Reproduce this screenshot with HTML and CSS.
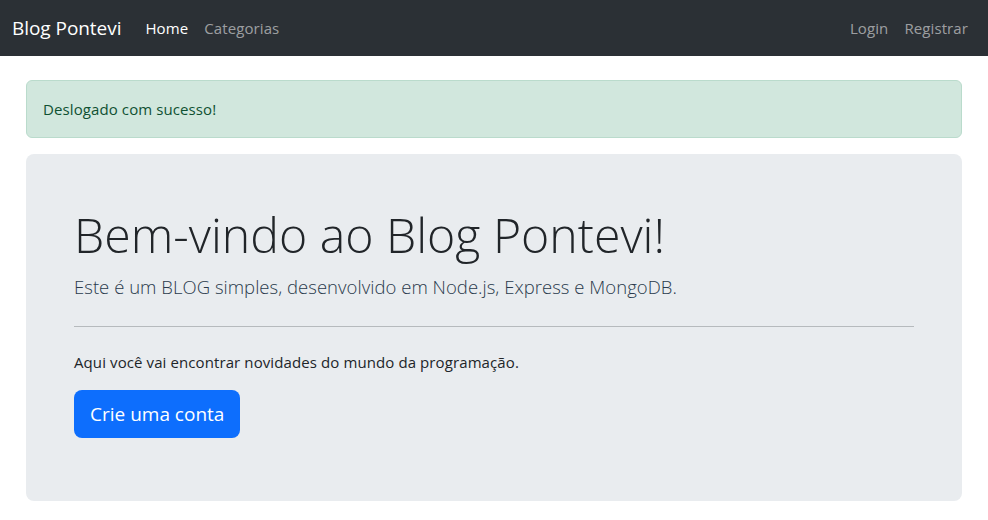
FILE: index.html
```html
<!DOCTYPE html>
<html lang="pt-br">
<head>
<meta charset="utf-8">
<title>Blog Pontevi</title>
<link rel="stylesheet" href="styles.css">
</head>
<body>
<nav class="navbar">
  <div class="nav-left">
    <a class="brand" href="#">Blog Pontevi</a>
    <a class="nav-link active" href="#">Home</a>
    <a class="nav-link" href="#">Categorias</a>
  </div>
  <div class="nav-right">
    <a class="nav-link" href="#">Login</a>
    <a class="nav-link" href="#">Registrar</a>
  </div>
</nav>
<main class="container">
  <div class="alert">Deslogado com sucesso!</div>
  <section class="jumbotron">
    <h1 class="display">Bem-vindo ao Blog Pontevi!</h1>
    <p class="lead">Este é um BLOG simples, desenvolvido em Node.js, Express e MongoDB.</p>
    <hr class="divider">
    <p class="text">Aqui você vai encontrar novidades do mundo da programação.</p>
    <a class="btn" href="#">Crie uma conta</a>
  </section>
</main>
</body>
</html>
```
FILE: styles.css
```css
* { box-sizing: border-box; }
body {
  margin: 0;
  font-family: "Open Sans", "Noto Sans", sans-serif;
  font-size: 16px;
  line-height: 1.5;
  color: #212529;
  background: #fff;
}
a { text-decoration: none; }
.navbar {
  height: 56px;
  background: #2b3035;
  display: flex;
  align-items: center;
  justify-content: space-between;
  padding: 0 12px;
}
.nav-left, .nav-right { display: flex; align-items: center; }
.brand {
  font-size: 19px;
  color: #fff;
  margin-right: 16px;
  letter-spacing: -0.05px;
}
.nav-link {
  font-size: 15px;
  color: rgba(255,255,255,.55);
  padding: 8px 8px;
  letter-spacing: 0.1px;
}
.nav-link.active { color: #fff; }
.container {
  padding: 24px 26px;
}
.alert {
  background: #d1e7dd;
  border: 1px solid #badbcc;
  color: #0f5132;
  border-radius: 6px;
  padding: 16px;
  font-size: 15px;
  line-height: 24px;
  margin-bottom: 16px;
  letter-spacing: 0.1px;
}
.jumbotron {
  background: #e9ecef;
  border-radius: 8px;
  padding: 50px 48px 48px;
  height: 347px;
}
.display {
  margin: 0 0 8px;
  font-size: 48.2px;
  font-weight: 300;
  line-height: 60px;
  letter-spacing: 0;
}
.lead {
  margin: 0;
  font-size: 18.5px;
  line-height: 30px;
  font-weight: 300;
  color: #2a3a4c;
  letter-spacing: 0.03px;
}
.divider {
  margin: 24px 0;
  border: 0;
  border-top: 1px solid rgba(33,37,41,.25);
}
.text {
  margin: 0 0 16px;
  font-size: 15px;
  letter-spacing: 0.1px;
}
.btn {
  display: inline-block;
  background: #0d6efd;
  color: #fff;
  font-size: 19px;
  line-height: 30px;
  padding: 9px 16px;
  border-radius: 8px;
  letter-spacing: 0;
}
```
